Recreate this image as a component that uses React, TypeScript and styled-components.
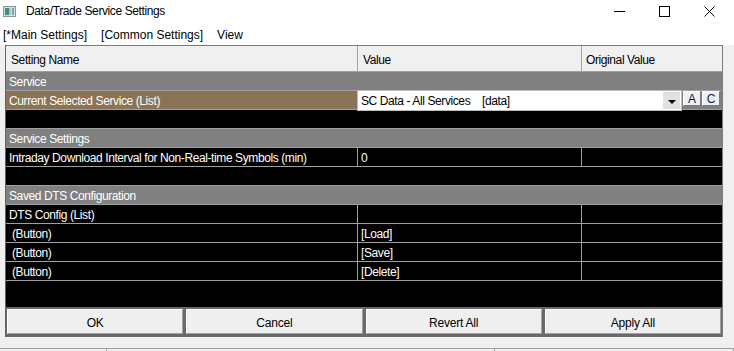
import styled, { createGlobalStyle } from "styled-components";

const GlobalStyle = createGlobalStyle`
  html, body {
    margin: 0;
    padding: 0;
    background: #f0f0f0;
  }
  body {
    font-family: "Liberation Sans", Arial, sans-serif;
    font-size: 12px;
    letter-spacing: -0.4px;
    color: #000;
  }
`;

const Window = styled.div`
  width: 734px;
  height: 351px;
  display: flex;
  flex-direction: column;
  overflow: hidden;
  background: #f0f0f0;
`;

const TitleBar = styled.div`
  height: 22px;
  background: #fff;
  display: flex;
  align-items: center;
  padding-left: 3px;
  .title {
    margin-left: 10px;
    font-size: 12px;
  }
`;

const Controls = styled.div`
  margin-left: auto;
  margin-right: 2px;
  display: flex;
  height: 22px;
`;

const CaptionButton = styled.div`
  width: 45px;
  height: 22px;
  display: flex;
  align-items: center;
  justify-content: center;
`;

const MenuBar = styled.div`
  height: 24px;
  background: #fff;
  display: flex;
  align-items: center;
  gap: 14px;
  padding-left: 3px;
  padding-top: 3px;
  box-sizing: border-box;
`;

const MenuItem = styled.span`
  font-size: 12px;
  letter-spacing: 0;
`;

const Panel = styled.div`
  margin-left: 5px;
  width: 718px;
  border: 1px solid #7a7a7a;
  border-left-color: #646464;
  border-bottom: none;
  box-sizing: border-box;
  background: #000;
`;

const Header = styled.div`
  height: 25px;
  display: grid;
  grid-template-columns: 352px 224px 1fr;
  background: #f0f0f0;
`;

const HeaderCell = styled.div<{ $last?: boolean }>`
  display: flex;
  align-items: center;
  padding-left: ${(p) => (p.$last ? "4px" : "5px")};
  padding-top: 2px;
  border-right: ${(p) => (p.$last ? "none" : "1px solid #a0a0a0")};
`;

const Row = styled.div<{ $bg?: string }>`
  height: 19px;
  box-sizing: border-box;
  border-top: 1px solid #a0a0a0;
  background: ${(p) => p.$bg ?? "#000"};
  color: #fff;
  display: grid;
  grid-template-columns: 352px 224px 1fr;
`;

const GroupRow = styled.div`
  height: 19px;
  box-sizing: border-box;
  border-top: 1px solid #a0a0a0;
  background: #808080;
  color: #fff;
  padding-left: 3px;
  padding-top: 1px;
  display: flex;
  align-items: center;
`;

const EmptyRow = styled.div<{ $h?: number }>`
  height: ${(p) => p.$h ?? 19}px;
  box-sizing: border-box;
  border-top: 1px solid #a0a0a0;
  background: #000;
`;

const Cell = styled.div<{ $last?: boolean }>`
  display: flex;
  align-items: center;
  padding-left: 3px;
  padding-top: 1px;
  border-right: ${(p) => (p.$last ? "none" : "1px solid #a0a0a0")};
  white-space: pre;
  overflow: hidden;
`;

const EditRow = styled.div`
  height: 19px;
  box-sizing: border-box;
  border-top: 1px solid #a0a0a0;
  background: #808080;
  display: flex;
`;

const EditName = styled.div`
  width: 351px;
  background: #8b7355;
  color: #fff;
  padding-left: 3px;
  padding-top: 1px;
  box-sizing: border-box;
  display: flex;
  align-items: center;
`;

const Combo = styled.div`
  position: relative;
  z-index: 1;
  margin-top: -1px;
  width: 325px;
  height: 21px;
  box-sizing: border-box;
  background: #fff;
  border: 1px solid #bcbcbc;
  display: flex;
  align-items: center;
  padding-left: 3px;
  padding-top: 1px;
  color: #000;
  white-space: pre;
`;

const ComboArrow = styled.div`
  margin-left: auto;
  margin-right: 1px;
  margin-top: -1px;
  width: 17px;
  height: 17px;
  background: #e1e1e1;
  display: flex;
  align-items: center;
  justify-content: center;
  &::after {
    content: "";
    border-left: 4px solid transparent;
    border-right: 4px solid transparent;
    border-top: 4px solid #000;
    margin-top: 2px;
  }
`;

const SmallButton = styled.div`
  margin-left: 1px;
  width: 18px;
  height: 15px;
  box-sizing: border-box;
  background: #f0f0f0;
  border-top: 1px solid #fff;
  border-left: 1px solid #fff;
  border-right: 1px solid #7a7a7a;
  border-bottom: 1px solid #7a7a7a;
  color: #101060;
  font-size: 12px;
  letter-spacing: 0;
  display: flex;
  align-items: center;
  justify-content: center;
`;

const ButtonBar = styled.div`
  height: 30px;
  box-sizing: border-box;
  background: #6a6a6a;
  display: flex;
  gap: 3px;
  padding: 2px 1px 3px 1px;
`;

const Button = styled.div`
  flex: 1;
  box-sizing: border-box;
  background: #efefef;
  border-top: 1px solid #fff;
  border-left: 1px solid #fff;
  border-right: 1px solid #a0a0a0;
  border-bottom: 1px solid #a0a0a0;
  padding-top: 2px;
  display: flex;
  align-items: center;
  justify-content: center;
  font-size: 12px;
  letter-spacing: -0.2px;
  color: #000;
`;

const StatusBar = styled.div`
  margin-top: 11px;
  height: 2px;
  display: flex;
  border-top: 1px solid #a0a0a0;
`;

const StatusPart = styled.div<{ $w?: number }>`
  width: ${(p) => (p.$w ? `${p.$w}px` : "auto")};
  flex: ${(p) => (p.$w ? "none" : 1)};
  border-right: 1px solid #a0a0a0;
`;

const AppIcon = () => (
  <svg width="13" height="11" viewBox="0 0 13 11">
    <rect x="0.5" y="0.5" width="12" height="10" fill="#d8dde0" stroke="#8c959c" />
    <rect x="2" y="2" width="4" height="7" fill="#3f8f7a" />
    <rect x="6" y="2" width="2" height="7" fill="#a9c8c0" />
    <rect x="9" y="2" width="2" height="7" fill="#7fa6b8" />
  </svg>
);

export default function App() {
  return (
    <>
      <GlobalStyle />
      <Window>
        <TitleBar>
          <AppIcon />
          <span className="title">Data/Trade Service Settings</span>
          <Controls>
            <CaptionButton>
              <svg width="11" height="11" viewBox="0 0 11 11">
                <line x1="0" y1="5.5" x2="11" y2="5.5" stroke="#000" strokeWidth="1" />
              </svg>
            </CaptionButton>
            <CaptionButton>
              <svg width="11" height="11" viewBox="0 0 11 11">
                <rect x="0.5" y="0.5" width="10" height="10" fill="none" stroke="#000" strokeWidth="1" />
              </svg>
            </CaptionButton>
            <CaptionButton>
              <svg width="11" height="11" viewBox="0 0 11 11">
                <path d="M0.5 0.5 L10.5 10.5 M10.5 0.5 L0.5 10.5" stroke="#000" strokeWidth="1" />
              </svg>
            </CaptionButton>
          </Controls>
        </TitleBar>
        <MenuBar>
          <MenuItem>[*Main Settings]</MenuItem>
          <MenuItem>[Common Settings]</MenuItem>
          <MenuItem>View</MenuItem>
        </MenuBar>
        <Panel>
          <Header>
            <HeaderCell>Setting Name</HeaderCell>
            <HeaderCell>Value</HeaderCell>
            <HeaderCell $last>Original Value</HeaderCell>
          </Header>
          <GroupRow>Service</GroupRow>
          <EditRow>
            <EditName>Current Selected Service (List)</EditName>
            <Combo>
              {"SC Data - All Services    [data]"}
              <ComboArrow />
            </Combo>
            <SmallButton>A</SmallButton>
            <SmallButton>C</SmallButton>
          </EditRow>
          <EmptyRow />
          <GroupRow>Service Settings</GroupRow>
          <Row>
            <Cell>Intraday Download Interval for Non-Real-time Symbols (min)</Cell>
            <Cell>0</Cell>
            <Cell $last />
          </Row>
          <EmptyRow />
          <GroupRow>Saved DTS Configuration</GroupRow>
          <Row>
            <Cell>DTS Config (List)</Cell>
            <Cell />
            <Cell $last />
          </Row>
          <Row>
            <Cell> (Button)</Cell>
            <Cell>[Load]</Cell>
            <Cell $last />
          </Row>
          <Row>
            <Cell> (Button)</Cell>
            <Cell>[Save]</Cell>
            <Cell $last />
          </Row>
          <Row>
            <Cell> (Button)</Cell>
            <Cell>[Delete]</Cell>
            <Cell $last />
          </Row>
          <EmptyRow $h={27} />
          <ButtonBar>
            <Button>OK</Button>
            <Button>Cancel</Button>
            <Button>Revert All</Button>
            <Button>Apply All</Button>
          </ButtonBar>
        </Panel>
        <StatusBar>
          <StatusPart $w={106} />
          <StatusPart $w={387} />
          <StatusPart />
        </StatusBar>
      </Window>
    </>
  );
}
